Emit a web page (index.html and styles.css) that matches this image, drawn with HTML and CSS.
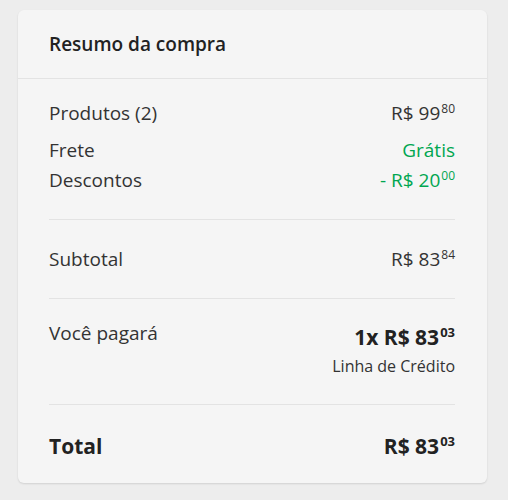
FILE: index.html
```html
<!DOCTYPE html>
<html lang="pt-BR">
<head>
  <meta charset="UTF-8">
  <meta name="viewport" content="width=device-width, initial-scale=1.0">
  <title>Resumo da compra</title>
  <link rel="stylesheet" href="styles.css">
</head>
<body>
  <div class="card">
    <div class="card-header">Resumo da compra</div>

    <div class="section first">
      <div class="row row-products">
        <span>Produtos (2)</span>
        <span class="price">R$ 99<sup>80</sup></span>
      </div>
      <div class="row">
        <span>Frete</span>
        <span class="green">Grátis</span>
      </div>
      <div class="row">
        <span>Descontos</span>
        <span class="price green">- R$ 20<sup>00</sup></span>
      </div>
    </div>

    <div class="section">
      <div class="row">
        <span>Subtotal</span>
        <span class="price">R$ 83<sup>84</sup></span>
      </div>
    </div>

    <div class="section pay">
      <div class="row pay-row">
        <span>Você pagará</span>
        <div class="pay-info">
          <span class="price big">1x R$ 83<sup>03</sup></span>
          <span class="method">Linha de Crédito</span>
        </div>
      </div>
    </div>

    <div class="section last">
      <div class="row total-row">
        <span>Total</span>
        <span class="price big">R$ 83<sup>03</sup></span>
      </div>
    </div>
  </div>
</body>
</html>
```

FILE: styles.css
```css
body {
  margin: 0;
  padding: 10px 21px 18px 18px;
  background: #ededed;
  font-family: 'Open Sans', Lato, sans-serif;
  color: #333;
}
.card {
  background: #f5f5f5;
  border-radius: 6px;
  box-shadow: 0 1px 2px rgba(0,0,0,0.12);
}
.card-header {
  height: 68px;
  display: flex;
  align-items: center;
  padding: 0 31px;
  border-bottom: 1px solid #e3e3e3;
  font-size: 19px;
  font-weight: 600;
  color: #222;
}
.section {
  margin: 0 32px 0 31px;
  padding: 27px 0;
  border-bottom: 1px solid #e3e3e3;
}
.section.first {
  padding-top: 22px;
}
.section.pay {
  padding: 22px 0 28px;
}
.section.last {
  border-bottom: none;
  padding: 26px 0 22px;
}
.row {
  display: flex;
  justify-content: space-between;
  align-items: center;
  font-size: 19px;
  line-height: 24px;
  margin-top: 6px;
}
.row:first-child {
  margin-top: 0;
}
.row-products {
  margin-bottom: 13px;
}
.price sup {
  font-size: 12px;
  vertical-align: top;
  line-height: 1;
  margin-left: 1px;
  position: relative;
  top: 2px;
}
.green {
  color: #00a650;
}
.pay-row {
  align-items: flex-start;
}
.pay-info {
  display: flex;
  flex-direction: column;
  align-items: flex-end;
  margin-top: 1px;
}
.big {
  font-size: 21px;
  font-weight: 700;
  line-height: 30px;
  color: #222;
}
.big sup {
  font-size: 13px;
  top: 4px;
}
.method {
  font-size: 16px;
  line-height: 20px;
  margin-top: 4px;
}
.total-row {
  font-weight: 700;
  font-size: 21px;
  line-height: 28px;
  color: #222;
}
```
